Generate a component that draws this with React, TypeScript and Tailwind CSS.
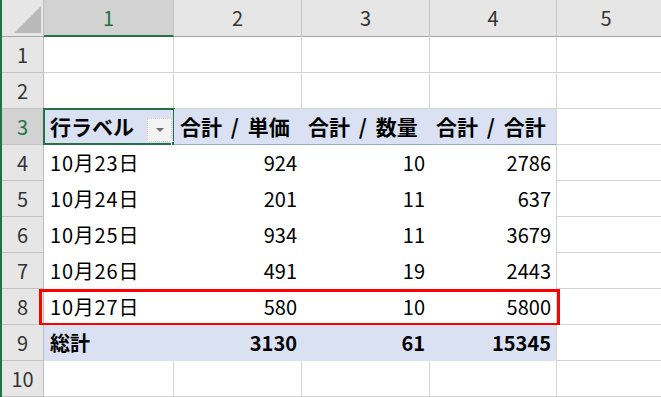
const COLS = [130, 128, 128, 127];

const ROWS: (string | number)[][] = [
    [],
    [],
    ["行ラベル", "合計 / 単価", "合計 / 数量", "合計 / 合計"],
    ["10月23日", 924, 10, 2786],
    ["10月24日", 201, 11, 637],
    ["10月25日", 934, 11, 3679],
    ["10月26日", 491, 19, 2443],
    ["10月27日", 580, 10, 5800],
    ["総計", 3130, 61, 15345],
    [],
];

const FONT = "[font-family:'Noto_Sans_CJK_JP','Noto_Sans',sans-serif]";

function RowHeader({ n }: { n: number }) {
    const selected = n === 3;
    return (
        <div
            className={`w-[42px] shrink-0 h-full flex items-center justify-center border-r border-b border-r-[#bdbdbd] border-b-[#c4c4c4] text-[20px] ${selected ? "bg-[#d2d2d2] text-[#217346]" : "bg-[#e6e6e6] text-[#333]"
                }`}
        >
            {n}
        </div>
    );
}

// "合計 / 単価" -> slash gets a little more air, like Excel's font
function Label({ text }: { text: string }) {
    const parts = text.split(" / ");
    if (parts.length < 2) return <span className="whitespace-nowrap">{text}</span>;
    return (
        <span className="whitespace-nowrap">
            {parts[0]} <span className="mx-[4px]">/</span> {parts[1]}
        </span>
    );
}

function Cell({ r, c }: { r: number; c: number }) {
    const row = ROWS[r - 1];
    const value = row[c];
    const inPivot = r >= 3 && r <= 9;
    const isHead = r === 3;
    const isTotal = r === 9;
    const isDate = r >= 4 && r <= 8 && c === 0;

    let cls = "h-full flex items-center text-black ";
    cls += isHead ? "text-[21px] " : "text-[20px] ";
    if (isDate) cls += "tracking-[0.8px] ";
    if (inPivot) {
        cls += isHead || isTotal ? "bg-[#d9e1f2] font-bold " : "bg-white ";
        if (isHead) cls += "border-b border-b-[#8ea9db] ";
        if (c === 3) cls += "border-r border-r-[#d4d4d4] ";
    } else {
        cls += "bg-white border-r border-b border-[#d4d4d4] ";
    }
    const numeric = typeof value === "number";
    cls += numeric ? "justify-end pr-[5px]" : "justify-start pl-[6px]";

    return (
        <div className={`relative shrink-0 ${cls}`} style={{ width: COLS[c] }}>
            {value !== undefined &&
                (typeof value === "string" ? (
                    <Label text={value} />
                ) : (
                    <span className="whitespace-nowrap">{value}</span>
                ))}
            {r === 3 && c === 0 && (
                <>
                    <div className="ml-auto mr-[2px] self-end mb-[2px] w-[25px] h-[24px] bg-[#f3f3f3] border border-dotted border-[#d0d0d0] flex items-center justify-center">
                        <svg width="10" height="6" viewBox="0 0 10 6">
                            <polygon points="1,1 9,1 5,5" fill="#6e6e6e" />
                        </svg>
                    </div>
                    <div className="absolute -left-[1px] -top-[1px] -right-[1px] -bottom-[1px] border-2 border-[#217346]" />
                    <div className="absolute -right-[4px] -bottom-[4px] w-[7px] h-[7px] bg-[#217346] border border-white" />
                </>
            )}
        </div>
    );
}

export default function App() {
    return (
        <div className={`w-[661px] h-[397px] overflow-hidden bg-white flex ${FONT}`}>
            <div className="w-[2px] shrink-0 bg-[#217346]" />
            <div className="flex-1 flex flex-col">
                {/* column headers */}
                <div className="flex h-[37px] shrink-0">
                    <div className="w-[42px] shrink-0 h-full bg-[#e6e6e6] border-r border-b border-r-[#bdbdbd] border-b-[#a6a6a6]">
                        <svg width="41" height="36" viewBox="0 0 41 36">
                            <polygon points="12,33 39,33 39,6" fill="#b9b9b9" />
                        </svg>
                    </div>
                    {COLS.map((w, i) => (
                        <div
                            key={i}
                            style={{ width: w }}
                            className={`shrink-0 h-full flex items-center justify-center text-[20px] border-r border-r-[#c6c6c6] ${i === 0
                                    ? "bg-[#d2d2d2] text-[#217346] border-b-2 border-b-[#217346]"
                                    : "bg-[#e6e6e6] text-[#333] border-b border-b-[#a6a6a6]"
                                }`}
                        >
                            {i + 1}
                        </div>
                    ))}
                    <div className="flex-1 h-full flex items-center justify-center text-[20px] text-[#333] bg-[#e6e6e6] border-b border-b-[#a6a6a6]">
                        <span className="-ml-[6px]">5</span>
                    </div>
                </div>

                {/* rows */}
                {ROWS.map((_, idx) => {
                    const r = idx + 1;
                    return (
                        <div key={r} className="relative flex h-[36px] shrink-0">
                            <RowHeader n={r} />
                            {COLS.map((_, c) => (
                                <Cell key={c} r={r} c={c} />
                            ))}
                            <div className="flex-1 h-full bg-white border-b border-[#d4d4d4]" />
                            {r === 8 && (
                                <div className="absolute left-[37px] top-0 w-[521px] h-[37px] border-[3px] border-[#ff0000] pointer-events-none" />
                            )}
                        </div>
                    );
                })}
            </div>
        </div>
    );
}
